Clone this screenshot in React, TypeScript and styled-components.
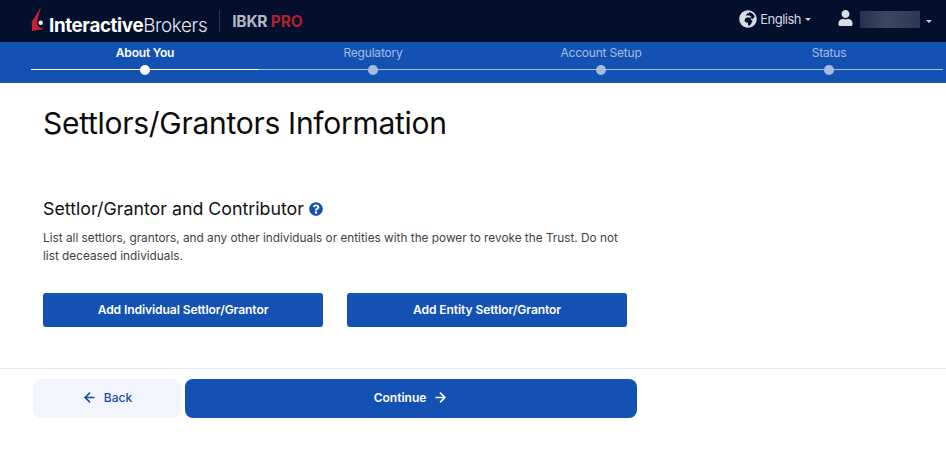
import styled, { createGlobalStyle } from 'styled-components'
import { FaGlobeAfrica, FaUser, FaQuestionCircle } from 'react-icons/fa'
import { ArrowLeft, ArrowRight } from 'lucide-react'

const GlobalStyle = createGlobalStyle`
  html, body { margin: 0; padding: 0; background: #fff; }
  * { box-sizing: border-box; }
  body { font-family: Inter, "Liberation Sans", sans-serif; }
`

const Page = styled.div`
  width: 946px;
  height: 460px;
  overflow: hidden;
  background: #fff;
`

const TopBar = styled.header`
  height: 42px;
  background: #020f2d;
  display: flex;
  align-items: center;
  padding: 0 14px 0 31px;
`

const LogoMark = styled.svg`
  width: 14px;
  height: 26px;
  margin-top: -2px;
  margin-right: 4px;
`

const LogoText = styled.div`
  color: #fff;
  font-size: 18.8px;
  letter-spacing: -0.37px;
  font-weight: 700;
  line-height: 1;
  margin-top: 11px;
  span { font-weight: 300; color: #e6e8ee; }
`

const Divider = styled.div`
  width: 1px;
  height: 22px;
  background: #2a3550;
  margin: 0 12px;
`

const Pro = styled.div`
  font-size: 15.5px;
  font-weight: 700;
  color: #b4b9c5;
  letter-spacing: -0.2px;
  span { color: #b3202c; }
`

const TopRight = styled.div`
  margin-left: auto;
  display: flex;
  align-items: center;
  color: #d4d8e0;
`

const Language = styled.div`
  display: flex;
  align-items: center;
  gap: 3px;
  font-size: 13px;
  letter-spacing: -0.5px;
  margin-right: 27px;
  margin-top: -4px;
  svg { width: 18px; height: 18px; color: #d9dde4; }
`

const Caret = styled.i`
  width: 0;
  height: 0;
  margin-left: 1px;
  border-left: 3px solid transparent;
  border-right: 3px solid transparent;
  border-top: 3px solid #cfd3dc;
`

const UserIcon = styled(FaUser)`
  width: 15px;
  height: 16px;
  color: #d9dde4;
  margin-right: 7px;
  margin-top: -6px;
`

const BlurredName = styled.div`
  width: 60px;
  height: 17px;
  background: linear-gradient(90deg, #26324d, #3b4660 45%, #2c3853);
  margin-right: 5px;
  margin-top: -4px;
`

const StepBar = styled.nav`
  height: 41px;
  background: #1352b3;
  padding-left: 31px;
  display: grid;
  grid-template-columns: repeat(4, 228px);
`

const Step = styled.div<{ $active?: boolean }>`
  position: relative;
  text-align: center;
  font-size: 12px;
  line-height: 14px;
  padding-top: 4px;
  font-weight: ${p => (p.$active ? 600 : 400)};
  letter-spacing: -0.2px;
  color: ${p => (p.$active ? '#fff' : '#a7bde0')};
  &::before {
    content: "";
    position: absolute;
    left: 0;
    right: 0;
    top: 27px;
    height: 1px;
    background: ${p => (p.$active ? '#fff' : '#a9c0e4')};
  }
  &::after {
    content: "";
    position: absolute;
    left: 50%;
    top: 22.5px;
    width: 10px;
    height: 10px;
    margin-left: -5px;
    border-radius: 50%;
    background: ${p => (p.$active ? '#fff' : '#a7bde0')};
  }
`

const Content = styled.main`
  padding: 0 43px;
  height: 286px;
  border-bottom: 1px solid #e3e5e8;
`

const Title = styled.h1`
  margin: 0;
  padding-top: 21px;
  font-size: 30px;
  line-height: 38px;
  font-weight: 400;
  letter-spacing: -0.28px;
  color: #0b0b0b;
`

const SectionTitle = styled.h2`
  margin: 55px 0 0;
  display: flex;
  align-items: center;
  gap: 5px;
  font-size: 17.8px;
  line-height: 24px;
  font-weight: 400;
  color: #111;
  svg { width: 14px; height: 14px; color: #1352b3; }
`

const Description = styled.p`
  margin: 8px 0 0;
  width: 590px;
  font-size: 11.8px;
  line-height: 18px;
  color: #3f3f3f;
`

const ButtonRow = styled.div`
  display: flex;
  gap: 24px;
  margin-top: 28px;
`

const AddButton = styled.button`
  width: 280px;
  height: 34px;
  padding: 0 0 2px;
  border: none;
  border-radius: 3px;
  background: #1352b3;
  color: #fff;
  font-family: inherit;
  font-size: 12.1px;
  font-weight: 600;
  letter-spacing: -0.1px;
`

const Footer = styled.footer`
  display: flex;
  gap: 4px;
  padding: 10px 0 0 33px;
`

const NavButton = styled.button<{ $primary?: boolean }>`
  display: flex;
  align-items: center;
  justify-content: center;
  gap: 7px;
  height: 39px;
  padding: 0 0 2px;
  width: ${p => (p.$primary ? '452px' : '148px')};
  border: none;
  border-radius: 8px;
  font-family: inherit;
  font-size: 12px;
  font-weight: ${p => (p.$primary ? 600 : 500)};
  background: ${p => (p.$primary ? '#1352b3' : '#f2f5fb')};
  color: ${p => (p.$primary ? '#fff' : '#174a9c')};
  svg { width: 15px; height: 15px; stroke-width: 2.6; }
`

export default function App() {
  return (
    <Page>
      <GlobalStyle />
      <TopBar>
        <LogoMark viewBox="0 0 14 26">
          <path d="M10 0 L0.7 15 L1 24 L13 22 L8 20 C5.5 18 5.5 14 6.7 12 Z" fill="#c8202f" />
          <circle cx="9.7" cy="15.7" r="2.2" fill="#f2f2f2" />
        </LogoMark>
        <LogoText>
          Interactive<span>Brokers</span>
        </LogoText>
        <Divider />
        <Pro>
          IBKR <span>PRO</span>
        </Pro>
        <TopRight>
          <Language>
            <FaGlobeAfrica />
            English
            <Caret />
          </Language>
          <UserIcon />
          <BlurredName />
          <Caret />
        </TopRight>
      </TopBar>
      <StepBar>
        <Step $active>About You</Step>
        <Step>Regulatory</Step>
        <Step>Account Setup</Step>
        <Step>Status</Step>
      </StepBar>
      <Content>
        <Title>Settlors/Grantors Information</Title>
        <SectionTitle>
          Settlor/Grantor and Contributor
          <FaQuestionCircle />
        </SectionTitle>
        <Description>
          List all settlors, grantors, and any other individuals or entities with the power to revoke the Trust. Do not
          list deceased individuals.
        </Description>
        <ButtonRow>
          <AddButton>Add Individual Settlor/Grantor</AddButton>
          <AddButton>Add Entity Settlor/Grantor</AddButton>
        </ButtonRow>
      </Content>
      <Footer>
        <NavButton>
          <ArrowLeft />
          Back
        </NavButton>
        <NavButton $primary>
          Continue
          <ArrowRight />
        </NavButton>
      </Footer>
    </Page>
  )
}
